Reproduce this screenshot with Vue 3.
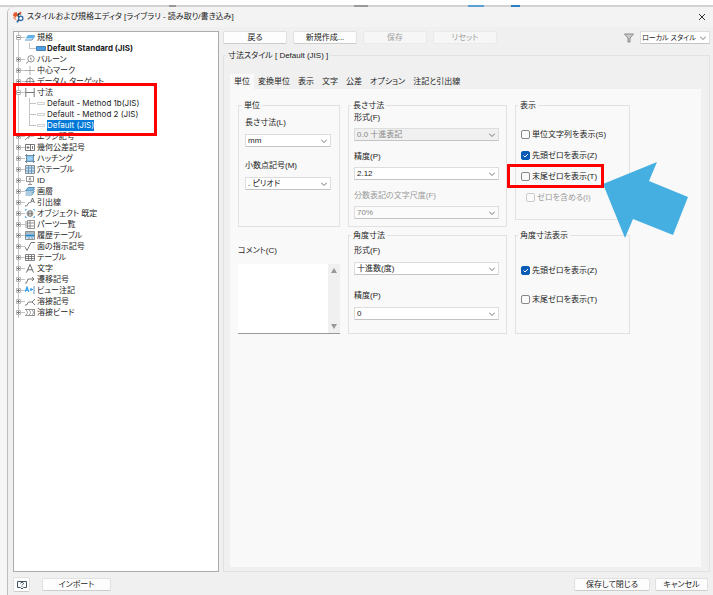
<script setup>
import { ref } from 'vue'

const tree = [
  { label: '規格', icon: 'standard', open: true, children: [{ label: 'Default Standard (JIS)', bold: true, icon: 'solid' }] },
  { label: 'バルーン', icon: 'balloon' },
  { label: '中心マーク', icon: 'center' },
  { label: 'データム ターゲット', icon: 'datum' },
  {
    label: '寸法', icon: 'dim', open: true,
    children: [
      { label: 'Default - Method 1b(JIS)', icon: 'hollow' },
      { label: 'Default - Method 2 (JIS)', icon: 'hollow' },
      { label: 'Default (JIS)', icon: 'hollow' }
    ]
  },
  { label: 'エッジ記号', icon: 'edge' },
  { label: '幾何公差記号', icon: 'fcf' },
  { label: 'ハッチング', icon: 'hatch' },
  { label: '穴テーブル', icon: 'hole' },
  { label: 'ID', icon: 'id' },
  { label: '画層', icon: 'layer' },
  { label: '引出線', icon: 'leader' },
  { label: 'オブジェクト 既定', icon: 'object' },
  { label: 'パーツ一覧', icon: 'parts' },
  { label: '履歴テーブル', icon: 'revision' },
  { label: '面の指示記号', icon: 'surface' },
  { label: 'テーブル', icon: 'table' },
  { label: '文字', icon: 'text' },
  { label: '遷移記号', icon: 'transition' },
  { label: 'ビュー注記', icon: 'view' },
  { label: '溶接記号', icon: 'weld' },
  { label: '溶接ビード', icon: 'bead' }
]

const icons = {
  standard: '<path d="M3 2h7L7.500 5.500H.5z" fill="#5fb0e8" stroke="none"/><path d="M0 7h7l3-4" fill="none" stroke="#2d7db8"/>',
  balloon: '<circle cx="6" cy="3.800" r="3.200"/><path d="M3.500 6.500 1 8.500M5 3h1v2.500"/>',
  center: '<path d="M5 0v9M0 4.500h10" stroke="#999"/>',
  datum: '<circle cx="5" cy="4.500" r="3.500"/><path d="M0 4.500h10M5 0v9"/>',
  dim: '<path d="M.8 0v9M9.200 0v9M1 4.500h8" stroke="#555"/>',
  edge: '<path d="M0 8l4-4h5M3 7l3-5"/>',
  fcf: '<path d="M.5 1.500h9v6h-9zM5.500 1.500v6M1.500 4.500h3M3 3v3M7.500 3v3" stroke="#555"/>',
  hatch: '<path d="M2 2h6v5H2z" fill="#9dd0f5" stroke="#64aee2"/><path d="M1.500 0v9M8.500 0v9M0 1.500h10M0 7.500h10" stroke="#5c7890"/>',
  hole: '<path d="M.5.5h9v8h-9z" fill="#c5dff2"/><path d="M.5 3h9M.5 6h9M3.500.5v8M6.500.5v8" stroke="#5b88aa"/>',
  id: '<path d="M1.500.5h7v5h-7zM5 6v2M3 8.500h4M4 4.500l1-3 1 3"/>',
  layer: '<path d="M3 .5h6.500L7 4H.5z" fill="#82bbe1" stroke="#397eae"/><path d="M.5 6H7l2.500-4M.5 8H7l2.500-4" stroke="#397eae"/>',
  leader: '<path d="M0 8h1.500l3-4M5.500 5l2-5 2 5M6.500 3.300h2" stroke="#555"/>',
  object: '<circle cx="5" cy="4.500" r="3"/><path d="M2 4.500h6M5 1.500v6M3.500 2v5M6.500 2v5"/><path d="M.5 2V.5H2M8 .5h1.500V2M.5 7v1.500H2M8 8.500h1.500V7" stroke="#48a8eb"/>',
  parts: '<path d="M2.500.5h7v8h-7zM2 3h7M2 6h7M5 .5v8M1 1v7"/>',
  revision: '<path d="M.5.5h9v8h-9z" fill="#cce5f6"/><path d="M1 2h8" stroke="#777"/><path d="M1 4.500h8" stroke="#2588c8" stroke-width="2"/><path d="M4 6v2M7 6v2"/>',
  surface: '<path d="M0 5l2 3.500L6 .5h4" stroke="#555"/>',
  table: '<path d="M.5 1.500h9v6h-9zM.5 3.500h9M.5 5.500h9M3.500 2v5M6.500 2v5" stroke="#666"/>',
  text: '<path d="M1.500 8.500l3.500-8 3.500 8M3 5.800h4" stroke="#444"/>',
  transition: '<path d="M0 8h1.500L3 4h6M7 2l2 2-2 2" stroke="#555"/>',
  view: '<path d="M0 6l2-5 2 5M1 4.300h2M5 3.500h3M6 2v3" stroke="#38a1ea" stroke-width="1.200"/><path d="M9 0v8" stroke="#3d7fad"/>',
  weld: '<path d="M0 8h1.500l2-3H7M10 2 7 5l3 3" stroke="#555"/>',
  bead: '<path d="M0 1.500h10M0 7.500h10M1 2c2 2 2 3 0 5M4 2c2 2 2 3 0 5M7 2c2 2 2 3 0 5M9.500 2v5"/>',
  solid: '<path d="M.5 2.500h9v4h-9z" fill="#4f9fe0" stroke="#2f6fa8"/>',
  hollow: '<path d="M1.500 3.500h7v2h-7z" stroke="#c4c4c4" fill="#fff"/>'
}

const tabs = ['単位', '変換単位', '表示', '文字', '公差', 'オプション', '注記と引出線']
const active = ref('単位')
const comment = ref('')
const selected = ref('Default (JIS)')
</script>

<template>
  <div class="page">
    <div class="behind"><i class="frag dark"></i><i class="frag mid"></i><i class="frag sky"></i><i class="frag blue"></i></div>
    <main class="window">
      <header class="titlebar">
        <svg class="logo" viewBox="0 0 13 13" aria-hidden="true">
          <path d="M5 1 2 2 1 5l3 2 2-3z" fill="#e8562e" /><path d="M1 6l1 3 3 1-1-3z" fill="#ee9a80" />
          <path d="M9.500 3.500C7 2 5.500 4 7 6s2 4-1 4.500" stroke="#2a2a2a" stroke-width="1.500" fill="none" />
          <circle cx="9.500" cy="8" r="2.300" fill="#fff" stroke="#2f6ea5" stroke-width="1.400" />
          <circle cx="9" cy="2" r="1.200" fill="#e8562e" /><circle cx="6" cy="11.500" r="1.200" fill="#2f6ea5" />
        </svg>
        <h1>スタイルおよび規格エディタ [ライブラリ - 読み取り/書き込み]</h1>
        <button class="close" aria-label="閉じる"><svg viewBox="0 0 8 8"><path d="M1 1l6 6M7 1 1 7" /></svg></button>
      </header>

      <div class="body">
        <nav class="tree">
          <ul class="roots">
            <li v-for="node in tree" :key="node.label" :class="{ marked: node.icon === 'dim' }">
              <div class="row">
                <svg class="toggle" viewBox="0 0 9 11"><path class="guide" d="M2.500 0v11M5 5.500h4" /><path class="box" d="M.5 3.500h4v4h-4z" /><path class="sign" :d="node.open ? 'M1 5.500h3' : 'M1 5.500h3M2.500 4v3'" /></svg>
                <svg class="icon" viewBox="0 0 10 9" v-html="icons[node.icon]"></svg>
                <span class="name">{{ node.label }}</span>
              </div>
              <ul v-if="node.children" class="kids">
                <li v-for="(kid, i) in node.children" :key="kid.label" class="row">
                  <svg class="branch" viewBox="0 0 20 11"><path class="guide" :d="'M2.500 0v11M13.500 0v' + (i === node.children.length - 1 ? 6 : 11) + 'M13 5.500h7'" /></svg>
                  <svg class="icon" viewBox="0 0 10 9" v-html="icons[kid.icon]"></svg>
                  <span class="name latin" :class="{ bold: kid.bold, selected: kid.label === selected }">{{ kid.label }}</span>
                </li>
              </ul>
            </li>
          </ul>
        </nav>

        <section class="editor">
          <div class="toolbar">
            <button class="btn">戻る</button>
            <button class="btn">新規作成...</button>
            <button class="btn" disabled>保存</button>
            <button class="btn" disabled>リセット</button>
            <svg class="filter" viewBox="0 0 10 10"><path d="M.5 1h9L6 5v4H4V5z" /></svg>
            <select class="scope" aria-label="スタイルの範囲"><option>ローカル スタイル</option></select>
          </div>

          <fieldset class="style">
            <legend>寸法スタイル [ Default (JIS) ]</legend>
            <div class="tabs" role="tablist">
              <button v-for="t in tabs" :key="t" role="tab" :aria-selected="active === t" :class="{ on: active === t }" @click="active = t">{{ t }}</button>
            </div>
            <div class="panel">
              <fieldset class="group unit">
                <legend>単位</legend>
                <div class="field">
                  <label for="len">長さ寸法(L)</label>
                  <select id="len"><option>mm</option></select>
                </div>
                <div class="field">
                  <label for="dec">小数点記号(M)</label>
                  <select id="dec"><option>. ピリオド</option></select>
                </div>
              </fieldset>

              <fieldset class="group linear">
                <legend>長さ寸法</legend>
                <div class="field">
                  <label for="lf">形式(F)</label>
                  <select id="lf" class="shaded" disabled><option>0.0 十進表記</option></select>
                </div>
                <div class="field">
                  <label for="lp">精度(P)</label>
                  <select id="lp"><option>2.12</option></select>
                </div>
                <div class="field">
                  <label for="fr" class="off">分数表記の文字尺度(F)</label>
                  <select id="fr" disabled><option>70%</option></select>
                </div>
              </fieldset>

              <fieldset class="group show">
                <legend>表示</legend>
                <label class="check"><input type="checkbox">単位文字列を表示(S)</label>
                <label class="check"><input type="checkbox" checked>先頭ゼロを表示(Z)</label>
                <div class="target">
                  <label class="check"><input type="checkbox">末尾ゼロを表示(T)</label>
                  <svg class="arrow" viewBox="0 0 86 76" aria-hidden="true"><path d="M0 22 54 0 46 19 85 35 70 73 30 57 22 76z" /></svg>
                </div>
                <label class="check sub off"><input type="checkbox" disabled>ゼロを含める(I)</label>
              </fieldset>

              <div class="comment">
                <label for="note">コメント(C)</label>
                <div class="memo">
                  <textarea id="note" v-model="comment"></textarea>
                  <div class="scroll"><svg viewBox="0 0 6 5"><path d="M3 0l3 5H0z" /></svg><svg viewBox="0 0 6 5"><path d="M0 0h6L3 5z" /></svg></div>
                </div>
              </div>

              <fieldset class="group angular">
                <legend>角度寸法</legend>
                <div class="field">
                  <label for="af">形式(F)</label>
                  <select id="af"><option>十進数(度)</option></select>
                </div>
                <div class="field">
                  <label for="ap">精度(P)</label>
                  <select id="ap"><option>0</option></select>
                </div>
              </fieldset>

              <fieldset class="group angshow">
                <legend>角度寸法表示</legend>
                <label class="check"><input type="checkbox" checked>先頭ゼロを表示(Z)</label>
                <label class="check"><input type="checkbox">末尾ゼロを表示(T)</label>
              </fieldset>
            </div>
          </fieldset>
        </section>
      </div>

      <footer class="footer">
        <button class="btn help" aria-label="ヘルプ"><svg viewBox="0 0 10 10"><path d="M.5 1.500h9v6H6.500L5 9 3.500 7.500h-3z" /><path d="M3.500 3.500c0-1.500 3-1.500 3 0 0 1-1.500 .8-1.500 1.800M5 6v.8" /></svg></button>
        <button class="btn import">インポート</button>
        <button class="btn save">保存して閉じる</button>
        <button class="btn cancel">キャンセル</button>
      </footer>
    </main>
  </div>
</template>

<style>
html, body, #app { height: 100%; }
body { margin: 0; background: #fff; }
</style>

<style scoped>
*, *::after { box-sizing: border-box; }
.page { min-height: 100%; display: flex; flex-direction: column; background: #f6f6f6; font: 8px/11px "Liberation Sans", "Noto Sans CJK JP", sans-serif; font-feature-settings: "palt"; color: #222; }
.behind { height: 7px; flex: none; display: flex; align-items: flex-end; background: linear-gradient(#fff 5px, #d2d2d2 5px); }
.frag { height: 2px; }
.dark { width: 7px; margin-left: 169px; background: #999; }
.mid { width: 14px; margin-left: 178px; background: #999; }
.sky { width: 16px; margin-left: 100px; background: #5a9fd0; }
.blue { width: 9px; margin-left: 27px; background: #2a7fc9; }
.window { flex: 1; display: flex; flex-direction: column; margin-left: 7px; background: #f0f0f0; border: 1px solid #bdbdbd; border-width: 0 0 0 1px; border-radius: 6px 6px 0 0; overflow: hidden; }
.titlebar { height: 20px; flex: none; display: flex; align-items: center; padding: 0 7px 0 4px; background: #f3f3f3; }
.logo { width: 12px; height: 12px; margin-right: 3px; }
h1 { margin: 0; flex: 1; font-size: 8px; line-height: 12px; font-weight: 400; white-space: nowrap; }
.close { border: 0; padding: 0; background: none; display: flex; }
.close svg { width: 8px; height: 8px; stroke: #333; fill: none; }
.body { flex: 1; display: flex; min-height: 0; padding: 4px 3px 0 5px; gap: 4px; }
.tree { width: 206px; flex: none; background: #fff; border: 1px solid #a9abb0; padding: 0 2px; }
ul { list-style: none; margin: 0; padding: 0; }
.row { display: flex; align-items: center; height: 11px; white-space: nowrap; }
.toggle { width: 9px; height: 11px; flex: none; }
.branch { width: 20px; height: 11px; flex: none; }
.guide { stroke: #c4c4c4; fill: none; }
.box { stroke: #b8b8b8; fill: #fff; }
.sign { stroke: #777; fill: none; }
.icon { width: 10px; height: 9px; flex: none; fill: none; stroke: #777; stroke-width: 0.8; }
.name { margin-left: 2px; }
.name.latin { margin-left: 1px; font-family: Inter, "Liberation Sans", sans-serif; }
.bold { font-weight: 700; }
.selected { background: #0078d7; color: #fff; }
.marked { position: relative; }
.marked::after { content: ""; position: absolute; left: -3px; top: -4px; width: 144px; height: 53px; border: 3px solid #f00; }
.editor { flex: 1; min-width: 0; display: flex; flex-direction: column; }
.toolbar { display: flex; align-items: center; gap: 6px; height: 13px; }
button, select, textarea { font: inherit; font-feature-settings: inherit; color: inherit; }
.btn { width: 64px; height: 13px; padding: 0; border: 1px solid #e0e0e0; border-bottom-color: #ccc; border-radius: 2px; background: #fdfdfd; line-height: 11px; }
.btn:disabled { background: #f6f6f6; border-color: #eaeaea; color: #a0a0a0; }
.filter { width: 10px; height: 10px; margin-left: auto; fill: #ccc; stroke: #888; }
select { appearance: none; width: 100%; height: 13px; padding: 0 12px 0 2px; border: 1px solid #ddd; border-bottom-color: #c4c4c4; border-radius: 1px; line-height: 11px; opacity: 1; background: #fff url("data:image/svg+xml,%3Csvg xmlns='http://www.w3.org/2000/svg' width='6' height='4'%3E%3Cpath d='M0 0.500l3 3 3-3' fill='none' stroke='%23777'/%3E%3C/svg%3E") no-repeat right 3px center; }
select:disabled { color: #888; background-color: #fbfbfb; }
select.shaded:disabled { background-color: #f0f0f0; }
.toolbar .scope { width: 70px; padding: 0 9px 0 1px; font-size: 7px; }
fieldset { margin: 0; padding: 0; border: 1px solid #e2e2e2; min-width: 0; }
legend { padding: 0 2px; line-height: 11px; }
.style { flex: 1; display: flex; flex-direction: column; margin-top: 6px; padding: 13px 8px 4px 6px; }
.style > legend { margin-left: -4px; }
.tabs { display: flex; height: 15px; }
.tabs button { border: 0; background: none; padding: 0 4px; height: 15px; white-space: nowrap; }
.tabs .on { background: #f9f9f9; }
.panel { flex: 1; background: #f9f9f9; display: grid; grid-template-columns: 102px 159px 115px; grid-template-rows: 127px 104px; gap: 3px 8px; align-content: start; padding: 11px 8px; }
.group { display: flex; flex-direction: column; }
.group > legend { margin-left: -3px; }
.unit { padding: 6px 8px 0 6px; gap: 13px; }
.linear { padding: 1px 7px 0 5px; gap: 10px; }
.angular { padding: 4px 7px 0 5px; gap: 15px; }
.field { display: flex; flex-direction: column; gap: 6px; }
.linear .field { gap: 5px; }
.off { color: #999; }
.check { display: flex; align-items: center; gap: 2px; height: 11px; white-space: nowrap; }
.check input { appearance: none; width: 9px; height: 9px; margin: 0; border: 1px solid #888; border-radius: 2px; background: #fafafa; }
.check input:checked { border-color: #0b5cb5; background: #0b5cb5 url("data:image/svg+xml,%3Csvg xmlns='http://www.w3.org/2000/svg' width='7' height='7'%3E%3Cpath d='M1.500 3.500l1.500 1.500 3-3' fill='none' stroke='white'/%3E%3C/svg%3E") center; }
.check input:disabled { border-color: #ccc; }
.sub { padding-left: 5px; }
.target { position: relative; }
.arrow { position: absolute; left: 82px; top: -9px; width: 86px; height: 76px; fill: #46afe1; }
.target::after { content: ""; position: absolute; left: -14px; top: -7px; width: 97px; height: 24px; border: 3px solid #f00; }
.show { padding: 18px 5px 0; gap: 10px; margin: 0 0 7px; }
.angshow { padding: 24px 5px 0; gap: 18px; }
.comment { display: flex; flex-direction: column; gap: 8px; padding-top: 15px; }
.memo { display: flex; height: 70px; border-bottom: 1px solid #999; }
textarea { flex: 1; min-width: 0; border: 0; padding: 2px; resize: none; background: #fff; }
.scroll { width: 12px; display: flex; flex-direction: column; justify-content: space-between; align-items: center; padding: 4px 0; background: #f0f0f0; }
.scroll svg { width: 6px; height: 5px; fill: #999; }
.footer { display: flex; align-items: center; padding: 5px 5px 3px 5px; gap: 5px; }
.footer .help { width: 17px; height: 15px; display: grid; place-items: center; }
.help svg { width: 10px; height: 10px; fill: none; stroke: #456; }
.import { margin-left: 7px; }
.footer .import { width: 69px; }
.footer .save { width: 76px; margin-left: auto; }
.footer .cancel { width: 53px; }
</style>
